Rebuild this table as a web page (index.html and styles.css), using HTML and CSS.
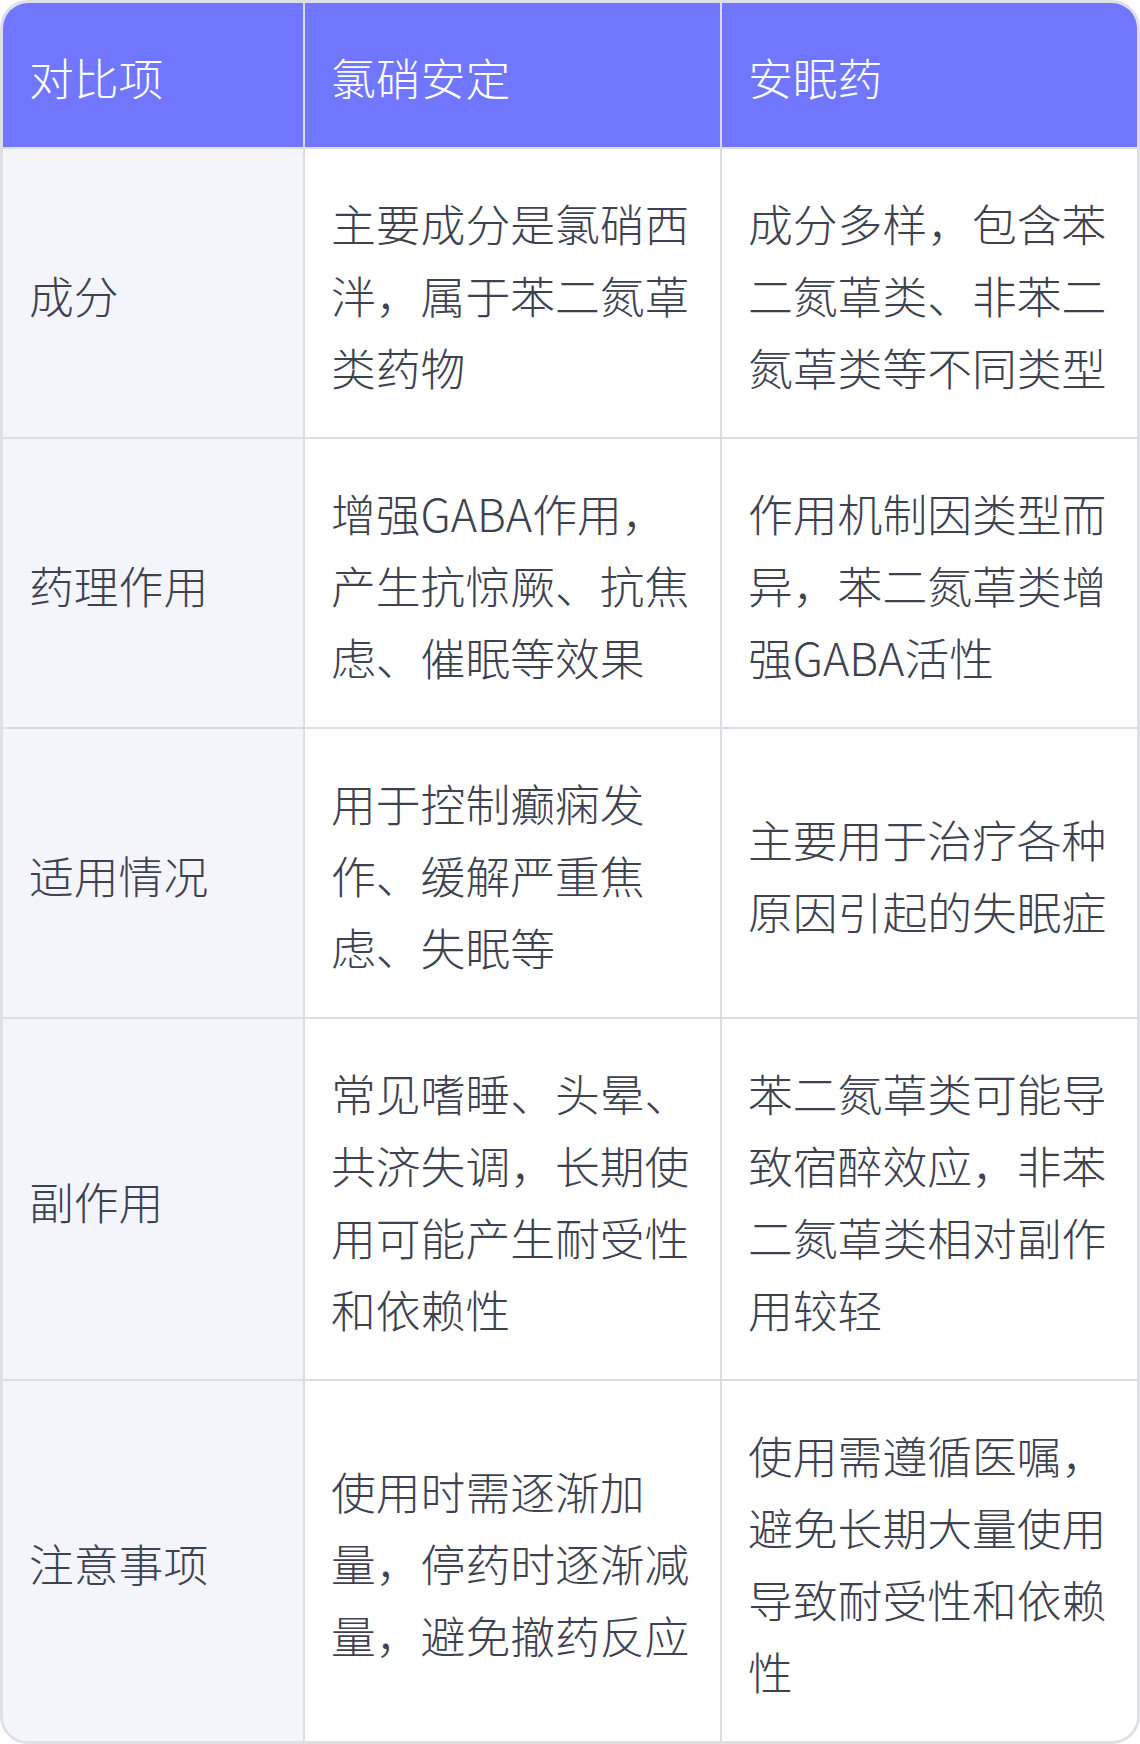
FILE: index.html
```html
<!DOCTYPE html>
<html>
<head>
  <title>氯硝安定与安眠药对比</title>
  <meta charset="utf-8">
  <link rel="stylesheet" href="styles.css">
</head>
<body>
  <div class="table-wrap">
    <table class="compare">
      <colgroup>
        <col class="col-item">
        <col class="col-drug">
        <col class="col-drug">
      </colgroup>
      <thead>
        <tr>
          <th>对比项</th>
          <th>氯硝安定</th>
          <th>安眠药</th>
        </tr>
      </thead>
      <tbody>
        <tr>
          <td>成分</td>
          <td>主要成分是氯硝西泮，属于苯二氮䓬类药物</td>
          <td>成分多样，包含苯二氮䓬类、非苯二氮䓬类等不同类型</td>
        </tr>
        <tr>
          <td>药理作用</td>
          <td>增强GABA作用，产生抗惊厥、抗焦虑、催眠等效果</td>
          <td>作用机制因类型而异，苯二氮䓬类增强GABA活性</td>
        </tr>
        <tr>
          <td>适用情况</td>
          <td>用于控制癫痫发作、缓解严重焦虑、失眠等</td>
          <td>主要用于治疗各种原因引起的失眠症</td>
        </tr>
        <tr>
          <td>副作用</td>
          <td>常见嗜睡、头晕、共济失调，长期使用可能产生耐受性和依赖性</td>
          <td>苯二氮䓬类可能导致宿醉效应，非苯二氮䓬类相对副作用较轻</td>
        </tr>
        <tr>
          <td>注意事项</td>
          <td>使用时需逐渐加量，停药时逐渐减量，避免撤药反应</td>
          <td>使用需遵循医嘱，避免长期大量使用导致耐受性和依赖性</td>
        </tr>
      </tbody>
    </table>
  </div>
</body>
</html>
```

FILE: styles.css
```css
html, body {
  margin: 0;
  padding: 0;
  background: #fff;
}
body {
  font-family: "Noto Sans CJK SC", "Noto Sans", sans-serif;
  color: #3e4250;
}
.table-wrap {
  width: 1140px;
  box-sizing: border-box;
  border: 3px solid #dfe0e5;
  border-radius: 28px;
  overflow: hidden;
}
.compare {
  width: 100%;
  border-collapse: separate;
  border-spacing: 0;
  table-layout: fixed;
  font-size: 44.8px;
  font-weight: 300;
  line-height: 72px;
}
.col-item {
  width: 302px;
}
.col-drug {
  width: 417px;
}
.compare th,
.compare td {
  padding: 38px 28px 34px 26px;
  text-align: left;
  vertical-align: middle;
  border-right: 2px solid #dcdde2;
  border-bottom: 2px solid #dcdde2;
}
.compare th:last-child,
.compare td:last-child {
  border-right: none;
}
.compare tbody tr:last-child td {
  border-bottom: none;
}
.compare th {
  background: #7176ff;
  color: #fff;
  font-weight: 300;
}
.compare td:first-child {
  background: #f4f5fa;
}
```
